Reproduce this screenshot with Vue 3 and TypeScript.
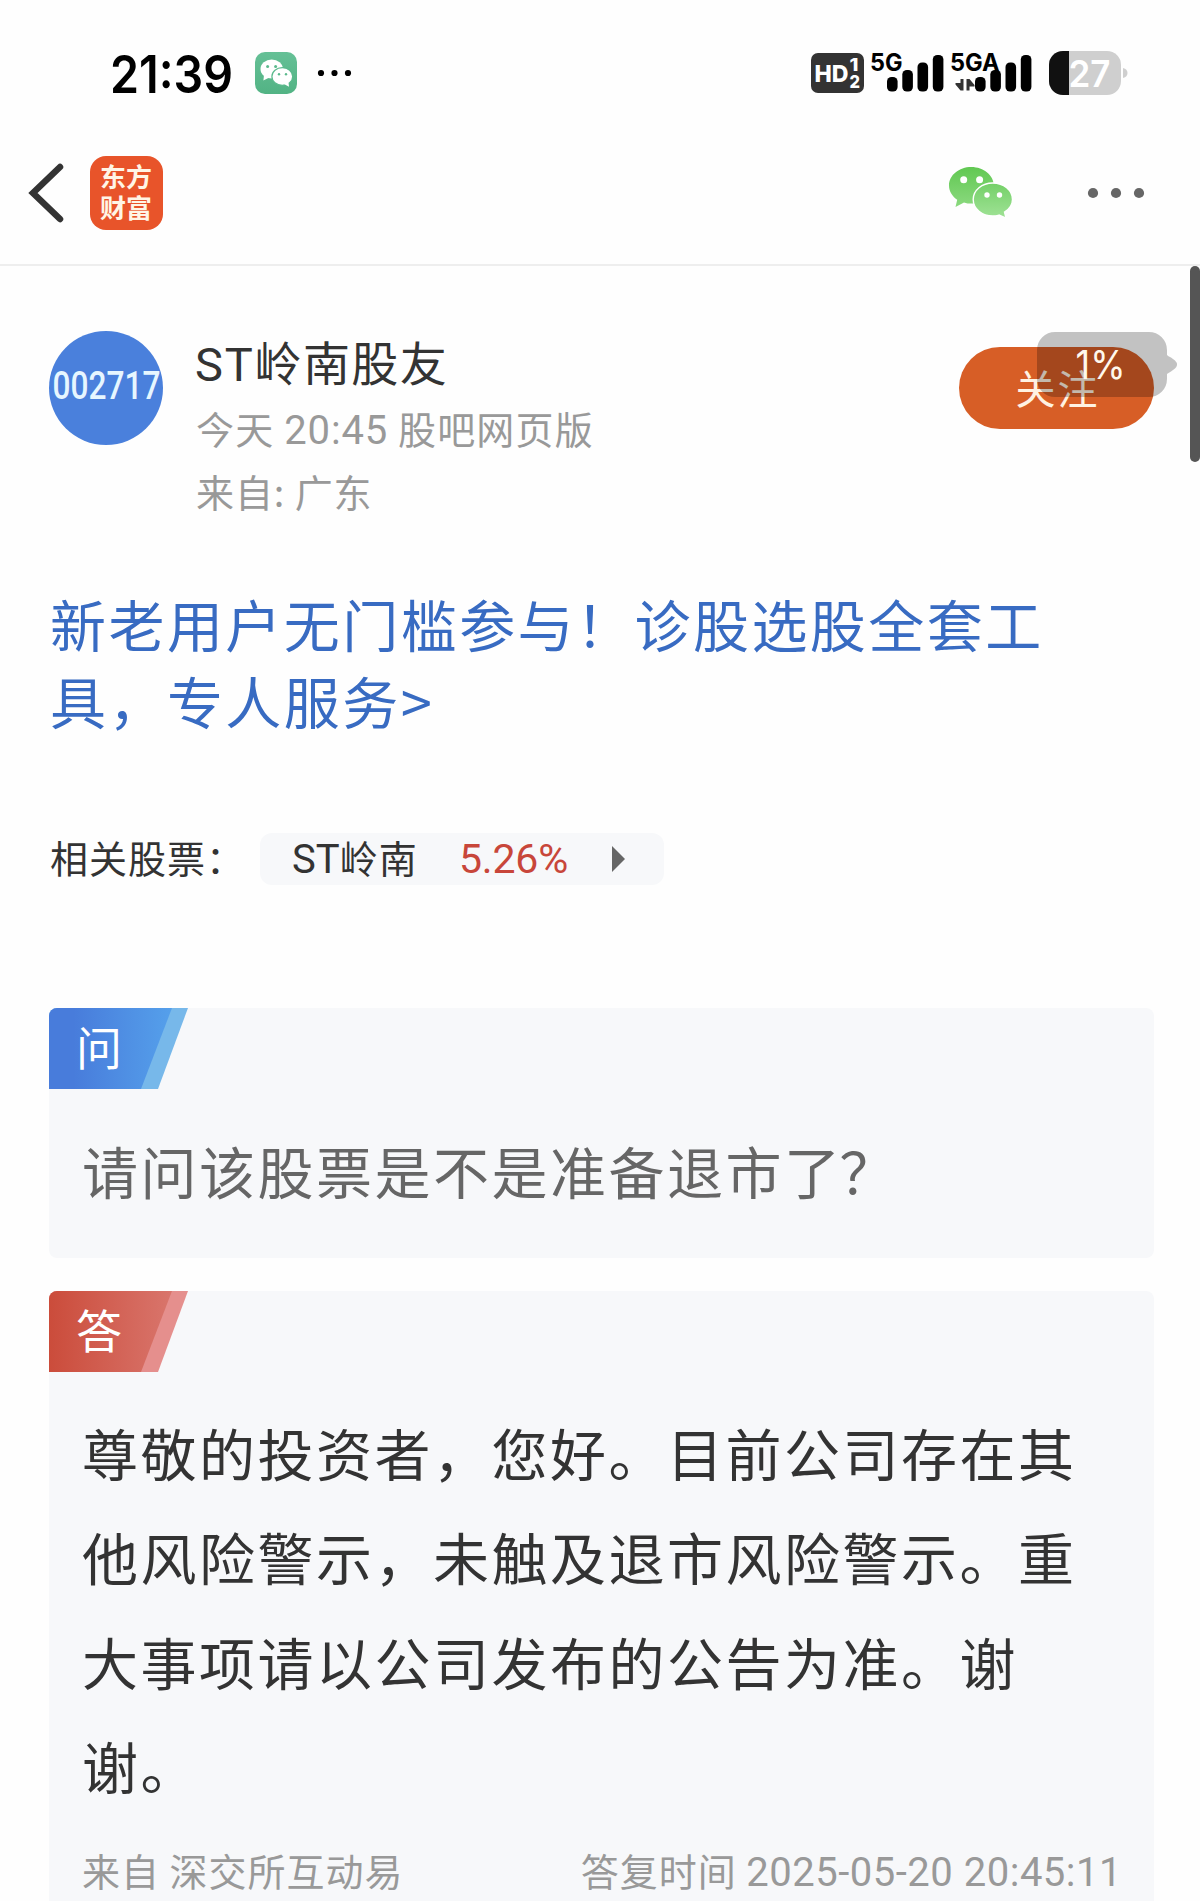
<script setup lang="ts">
const promo: string[] = ['新老用户无门槛参与！诊股选股全套工', '具，专人服务>']
const answer: string[] = [
  '尊敬的投资者，您好。目前公司存在其',
  '他风险警示，未触及退市风险警示。重',
  '大事项请以公司发布的公告为准。谢',
  '谢。',
]
const bars = [
  { x: 0, y: 25, h: 14.5 },
  { x: 15.3, y: 18, h: 21.5 },
  { x: 30.5, y: 10.5, h: 29 },
  { x: 45.8, y: 3, h: 36.5 },
]
</script>

<template>
  <div class="page">
    <header class="status">
      <svg class="clock" width="130" height="60" viewBox="0 0 130 60">
        <text x="0" y="50" font-size="51.5" font-weight="600" textLength="123" lengthAdjust="spacingAndGlyphs">21:39</text>
      </svg>
      <svg class="notice" width="110" height="44" viewBox="0 0 110 44">
        <defs>
          <linearGradient id="mini" x1="0" y1="0" x2="0" y2="1">
            <stop offset="0" stop-color="#65c096" />
            <stop offset="1" stop-color="#52b384" />
          </linearGradient>
        </defs>
        <rect x="0" y="1" width="42" height="42" rx="10" fill="url(#mini)" />
        <g fill="#fff">
          <ellipse cx="16.7" cy="18" rx="11.2" ry="9.5" />
          <path d="M9 24l-.6 5.4 6-3z" />
          <ellipse cx="27.3" cy="25.5" rx="10.4" ry="8.8" stroke="#5bba8d" stroke-width="1.2" />
          <path d="M29 33l5 2.8-.6-5z" />
        </g>
        <g fill="#5bba8d">
          <circle cx="12.6" cy="15.5" r="1.5" /><circle cx="20.6" cy="15.5" r="1.5" />
          <circle cx="24" cy="23.2" r="1.2" /><circle cx="31" cy="23.2" r="1.2" />
        </g>
        <g fill="#000">
          <circle cx="66" cy="22" r="3.1" /><circle cx="79.5" cy="22" r="3.1" /><circle cx="93" cy="22" r="3.1" />
        </g>
      </svg>
      <svg class="system" width="320" height="46" viewBox="0 0 320 46">
        <rect x="0" y="3" width="53" height="40" rx="7" fill="#333" />
        <g fill="#fff" font-weight="800">
          <text x="3.5" y="31.5" font-size="23.5" textLength="34" lengthAdjust="spacingAndGlyphs">HD</text>
          <text x="38.5" y="21" font-size="17" textLength="9" lengthAdjust="spacingAndGlyphs">1</text>
          <text x="38.5" y="38" font-size="18" textLength="10.5" lengthAdjust="spacingAndGlyphs">2</text>
        </g>
        <g font-weight="700" font-size="24">
          <text x="59" y="20.5" textLength="32.5" lengthAdjust="spacingAndGlyphs">5G</text>
          <text x="139" y="20.5" textLength="49.5" lengthAdjust="spacingAndGlyphs">5GA</text>
        </g>
        <g transform="translate(76 2)">
          <rect v-for="b in bars" :key="b.x" :x="b.x" :y="b.y" width="10.6" :height="b.h" rx="4.6" />
        </g>
        <g transform="translate(164 2)">
          <rect v-for="b in bars" :key="b.x" :x="b.x" :y="b.y" width="10.6" :height="b.h" rx="4.6" />
        </g>
        <path d="M149.500 29h3v11.500h-3l-5-6v-1.500h5zM155.500 40.500v-11.500h3l5 6v1.500h-5v4z" fill="#333" />
        <clipPath id="cell"><rect x="238" y="1" width="72" height="44" rx="14" /></clipPath>
        <g clip-path="url(#cell)">
          <rect x="238" y="1" width="72" height="44" fill="#cfcfcf" />
          <rect x="238" y="1" width="20" height="44" fill="#111" />
        </g>
        <path d="M312 18q4.500 1 4.500 5t-4.500 5z" fill="#cfcfcf" />
        <text x="257.500" y="36.500" font-size="36.500" font-weight="600" fill="#fff" textLength="42" lengthAdjust="spacingAndGlyphs">27</text>
      </svg>
    </header>

    <nav class="nav">
      <svg class="back" width="38" height="62" viewBox="0 0 38 62">
        <path d="M33 5L6 31l27 26" fill="none" stroke="#333" stroke-width="6.500" stroke-linecap="round" stroke-linejoin="miter" />
      </svg>
      <div class="logo"><span>东方</span><span>财富</span></div>
      <svg class="wechat" width="66" height="54" viewBox="0 0 66 54">
        <defs>
          <linearGradient id="big" x1="0" y1="0" x2="0" y2="1">
            <stop offset="0" stop-color="#61c852" /><stop offset="1" stop-color="#8bd97f" />
          </linearGradient>
          <linearGradient id="small" x1="0" y1="0" x2="0" y2="1">
            <stop offset="0" stop-color="#74d068" /><stop offset="1" stop-color="#a0e296" />
          </linearGradient>
        </defs>
        <path d="M23.300 1C11 1 1 9.200 1 19.500c0 6 3.300 10.900 8.200 14.200L7.500 41l8.500-4.600c2.300.9 4.700 1.100 7.300 1.100 12.400 0 22.500-7.900 22.500-18S35.700 1 23.300 1z" fill="url(#big)" />
        <path d="M44.800 17C34 17 25.200 24.300 25.200 33.500S34 50 44.800 50c2.200 0 4.300-.3 6.200-.9l7 3-1.500-6c4.900-3 8-7.500 8-12.600C64.500 24.300 55.600 17 44.800 17z" fill="url(#small)" stroke="#fff" stroke-width="1.400" />
        <g fill="#fff">
          <circle cx="15.700" cy="13.700" r="3.500" /><circle cx="31.600" cy="13.700" r="3.500" />
          <circle cx="39" cy="29" r="2.700" /><circle cx="51.500" cy="29" r="2.700" />
        </g>
      </svg>
      <svg class="more" width="58" height="12" viewBox="0 0 58 12" fill="#666">
        <circle cx="6" cy="6" r="5.100" /><circle cx="29" cy="6" r="5.100" /><circle cx="52" cy="6" r="5.100" />
      </svg>
    </nav>

    <main class="content">
      <section class="author">
        <svg class="avatar" width="114" height="114" viewBox="0 0 114 114">
          <circle cx="57" cy="57" r="57" fill="#4a80dc" />
          <text class="code" x="3.500" y="67.500" font-size="38.500" font-weight="500" fill="#e6f6ff" textLength="108" lengthAdjust="spacingAndGlyphs">002717</text>
        </svg>
        <div class="who">
          <div class="name"><span class="lat">ST</span>岭南股友</div>
          <div class="meta">今天 <span class="lat">20:45</span> 股吧网页版</div>
          <div class="meta second">来自: 广东</div>
        </div>
        <button class="follow">关注</button>
        <svg class="progress" width="142" height="66" viewBox="0 0 142 66">
          <path d="M18 0h94a18 18 0 0 1 18 18v5q1 1 4 2.500l4 3q4 4 0 8l-4 3q-3 1.500-4 2.500v5a18 18 0 0 1-18 18H18A18 18 0 0 1 0 47V18A18 18 0 0 1 18 0z" fill="#000" fill-opacity=".235" />
          <text x="38.500" y="47" font-size="39" fill="#fff8ec" textLength="50" lengthAdjust="spacingAndGlyphs">1%</text>
        </svg>
      </section>

      <a class="promo"><span v-for="line in promo" :key="line">{{ line }}</span></a>

      <section class="related">
        <span class="label">相关股票：</span>
        <div class="chip">
          <span class="stock"><span class="lat">ST</span>岭南</span>
          <span class="change lat">5.26%</span>
          <svg width="13" height="26" viewBox="0 0 13 26"><path d="M0 0l13 13L0 26z" fill="#666" /></svg>
        </div>
      </section>

      <article class="card ask">
        <div class="tag"><span>问</span></div>
        <p>请问该股票是不是准备退市了<span class="mark">？</span></p>
      </article>

      <article class="card reply">
        <div class="tag"><span>答</span></div>
        <p><span v-for="line in answer" :key="line" class="line">{{ line }}</span></p>
        <footer>
          <span>来自 深交所互动易</span>
          <span>答复时间 <span class="lat date">2025-05-20 20:45:11</span></span>
        </footer>
      </article>
    </main>
    <div class="scrollbar"></div>
  </div>
</template>

<style>
body { background: #fff; }
</style>

<style scoped>
.page {
  position: relative;
  width: 1200px;
  height: 1901px;
  overflow: hidden;
  background: #fefefe;
  color: #333;
  font-family: "Noto Sans CJK SC", sans-serif;
}
svg { display: block; flex: none; overflow: visible; }
svg text { font-family: Inter, sans-serif; }
svg .code { font-family: Roboto, sans-serif; }
.status { display: flex; align-items: center; height: 130px; padding: 16px 72px 0 110px; box-sizing: border-box; }
.clock { margin-bottom: 1px; }
.notice { margin-left: 15px; }
.system { margin-left: auto; margin-right: -3px; }
.nav {
  display: flex;
  align-items: center;
  height: 136px;
  padding: 0 55px 8px 27px;
  box-sizing: border-box;
  border-bottom: 2px solid #eee;
}
.logo {
  display: flex;
  flex-direction: column;
  align-items: center;
  justify-content: center;
  width: 73px;
  height: 74px;
  margin-left: 25px;
  border-radius: 16px;
  background: #e8542a;
  color: #fff5e6;
  font-size: 26px;
  font-weight: 700;
  line-height: 31px;
  padding-bottom: 5px;
  padding-right: 1px;
  box-sizing: border-box;
}
.wechat { margin-left: auto; }
.more { margin-left: 73px; }
.content { padding: 65px 46px 0 49px; }
.author { position: relative; display: flex; height: 206px; align-items: flex-start; }
.who { margin-left: 32px; }
.name { height: 62px; line-height: 60px; font-size: 47px; letter-spacing: 1.4px; white-space: nowrap; }
.name .lat { font-size: 47px; letter-spacing: 1.8px; }
.lat { font-family: Roboto, sans-serif; line-height: 1; }
.meta { height: 63px; margin-top: 3px; line-height: 63px; font-size: 38px; letter-spacing: 1.2px; color: #999; white-space: nowrap; padding-left: 1px; }
.meta .lat { font-size: 40px; letter-spacing: .9px; }
.meta.second { margin-top: 0; letter-spacing: .9px; }
.follow {
  width: 195px;
  height: 82px;
  margin: 16px 0 0 auto;
  padding: 0 0 3px 2px;
  border: 0;
  border-radius: 41px;
  background: #d75e26;
  color: #fff2e2;
  font: 40px "Noto Sans CJK SC", sans-serif;
  letter-spacing: 2px;
}
.progress { position: absolute; left: 988px; top: 1px; }
.promo { display: block; margin-top: 47px; padding-left: 1px; color: #386bc2; font-size: 56px; line-height: 77px; letter-spacing: 2.450px; }
.promo span, .reply .line { display: block; white-space: nowrap; }
.related { display: flex; align-items: center; height: 52px; margin-top: 95px; font-size: 38px; letter-spacing: 1px; line-height: 50px; }
.label { width: 210px; padding-left: 1px; height: 54px; white-space: nowrap; }
.chip { display: flex; align-items: center; width: 404px; height: 52px; padding-left: 32px; box-sizing: border-box; border-radius: 12px; background: #f7f8fa; }
.stock { width: 167px; height: 54px; white-space: nowrap; }
.stock .lat { font-size: 40px; letter-spacing: 0; }
.change { width: 153px; color: #c8463a; font-size: 41px; letter-spacing: -.2px; }
.card { width: 1105px; border-radius: 8px; background: #f7f8fa; overflow: hidden; }
.ask { height: 250px; margin-top: 123px; }
.reply { height: 640px; margin-top: 33px; }
.tag {
  width: 139px;
  height: 81px;
  color: #fff;
  font-size: 46px;
  line-height: 74px;
  clip-path: polygon(0 0, 100% 0, 109px 100%, 0 100%);
}
.tag span {
  display: block;
  width: 123px;
  height: 81px;
  padding-left: 27px;
  box-sizing: border-box;
  clip-path: polygon(0 0, 100% 0, 92px 100%, 0 100%);
}
.ask .tag { background: #77b8ea; }
.ask .tag span { background: linear-gradient(90deg, #487cdb 20%, #55a0eb); }
.reply .tag { background: #e58f8d; }
.reply .tag span { background: linear-gradient(90deg, #cb4c3b, #d9756c); }
.card p { margin: 0; padding-left: 33px; font-size: 56px; letter-spacing: 2.500px; line-height: 104.300px; white-space: nowrap; }
.ask p { padding-top: 29px; color: #666; }
.mark { margin-left: -3px; }
.reply p { padding-top: 28px; }
.reply footer { display: flex; justify-content: space-between; padding: 0 32px 0 33px; color: #999; font-size: 38px; letter-spacing: 1px; line-height: 56px; margin-top: 25px; white-space: nowrap; }
.reply .date { font-size: 40px; letter-spacing: .5px; }
.scrollbar { position: absolute; top: 266px; right: 0; width: 10px; height: 196px; border-radius: 5px; background: #555; }
</style>
